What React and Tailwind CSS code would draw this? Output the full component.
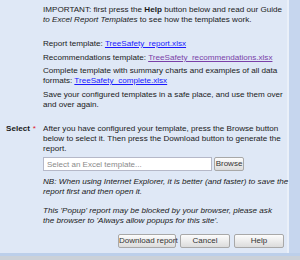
const btn =
  "h-[14px] rounded-[2px] border border-[#a8a8a8] bg-gradient-to-b from-[#fcfcfc] to-[#dcdcdc] text-[8px] leading-[12px] text-[#333] whitespace-nowrap";

export default function App() {
  return (
    <div className="w-[300px] h-[260px] overflow-hidden flex flex-col bg-[#c6d6ee] font-['Liberation_Sans',Arial,sans-serif] text-[8.1px] leading-[10px] text-[#1a1a1a]">
      <div className="flex h-[253px]">
        <div className="w-[289px] h-full bg-[#dfe8f6] border-r-2 border-[#eaf0f9] pt-[5px] whitespace-nowrap">
          <div className="ml-[43px]">
            <p>
              IMPORTANT: first press the <b>Help</b> button below and read our Guide
              <br />
              <i>to Excel Report Templates</i> to see how the templates work.
            </p>
            <p className="mt-[14px]">
              Report template: <a className="text-[#1a1aff] underline">TreeSafety_report.xlsx</a>
            </p>
            <p className="mt-[3.5px]">
              Recommendations template:{" "}
              <a className="text-[#7a3fa8] underline">TreeSafety_recommendations.xlsx</a>
            </p>
            <p className="mt-[3.5px]">
              Complete template with summary charts and examples of all data
              <br />
              formats: <a className="text-[#1a1aff] underline">TreeSafety_complete.xlsx</a>
            </p>
            <p className="mt-[4px]">
              Save your configured templates in a safe place, and use them over
              <br />
              and over again.
            </p>
          </div>

          <div className="flex mt-[14px]">
            <div className="w-[43px] shrink-0 pl-[6px] flex gap-[3px]">
              <span className="font-bold">Select</span>
              <span className="text-[#e0202a]">*</span>
            </div>
            <div className="flex-1">
              <p>
                After you have configured your template, press the Browse button
                <br />
                below to select it. Then press the Download button to generate the
                <br />
                report.
              </p>
              <div className="flex gap-[2px] mt-[3px]">
                <input
                  className="w-[169px] h-[14px] bg-white border border-[#b5b8c8] px-[3px] text-[8px] placeholder:text-[#8a8a8a] outline-none"
                  placeholder="Select an Excel template..."
                />
                <button className={`${btn} w-[30px]`}>Browse</button>
              </div>
              <p className="italic mt-[6px]">
                NB: When using Internet Explorer, it is better (and faster) to save the
                <br />
                report first and then open it.
              </p>
              <p className="italic mt-[9px]">
                This 'Popup' report may be blocked by your browser, please ask
                <br />
                the browser to 'Always allow popups for this site'.
              </p>
            </div>
          </div>

          <div className="flex justify-end gap-[4px] mt-[8px] pr-[3px]">
            <button className={`${btn} w-[58px]`}>Download report</button>
            <button className={`${btn} w-[50px]`}>Cancel</button>
            <button className={`${btn} w-[50px]`}>Help</button>
          </div>
        </div>
        <div className="flex-1 bg-[#c6d6ee]" />
      </div>
      <div className="h-[3px] bg-[#bccfea]" />
      <div className="flex-1 bg-[#cbd1d8]" />
    </div>
  );
}
